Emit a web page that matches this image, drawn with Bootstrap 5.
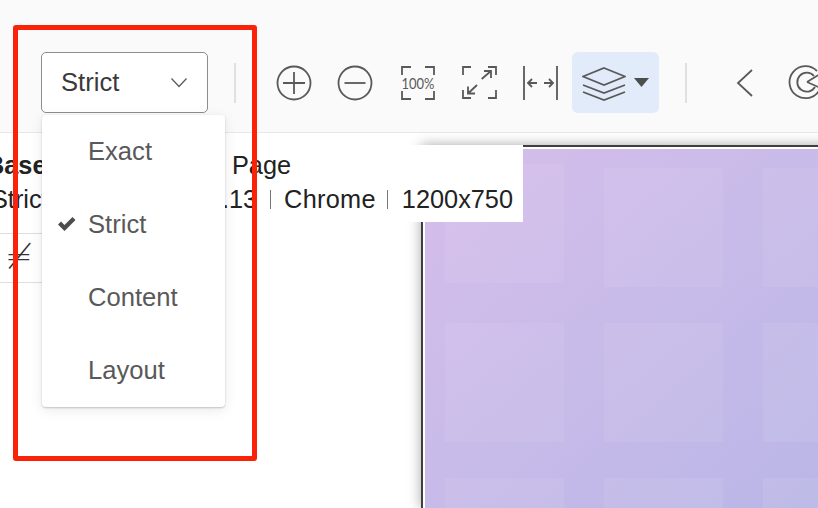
<!DOCTYPE html>
<html lang="en">
<head>
<meta charset="utf-8">
<title>Strict</title>
<link rel="stylesheet" href="https://cdn.jsdelivr.net/npm/bootstrap@5.3.0/dist/css/bootstrap.min.css">
<style>
html,body{height:100%;overflow:hidden;background:#fff}
body{font-family:"Liberation Sans",Arial,sans-serif;color:#333;position:relative;width:818px;height:508px}
.bar{height:133px;padding-top:33px;background:#fafafa;border-bottom:1px solid #e8e8e8;overflow:hidden}
.bar svg{flex:none;display:block}
.pick{width:167px;height:61px;margin-left:41px;padding:0 19px 0 19px;background:#fff;border:1.5px solid #8d8d8d;border-radius:5px;font-size:25.6px;color:#3a3a3a;flex:none}
.pick:hover,.pick:active{background:#fff;border-color:#8d8d8d;color:#3a3a3a}
.vsep{width:1.5px;height:40px;background:#e0e0e0;flex:none;margin-left:26px}
.ic{margin-left:25px}
.ic-a{margin-left:40.5px}
.ic-b{margin-left:26px}
.ic-c{margin-left:24px}
.ic-d{margin-left:48.5px}
.ic-e{margin-left:32px}
.stack{width:87px;height:61px;margin-left:14px;padding:0 0 0 10px;background:#e1ebf9;border:0;border-radius:6px;flex:none}
.stack:hover,.stack:active{background:#e1ebf9}
.ink{fill:none;stroke:#595959;stroke-width:1.8}
.hair{stroke-width:1.2}
.solid{fill:#4d4d4d;stroke:none}
.pct{font-family:Lato,"Liberation Sans",sans-serif;font-size:15px;fill:#595959}
.body-area{height:375px}
.side{width:421px;flex:none;padding-top:100px}
.neq{width:200px;height:50px;border-top:1px solid #dedede;border-bottom:1px solid #dedede;padding-left:5px;font-family:"DejaVu Sans",sans-serif;font-size:33px;font-weight:200;line-height:46px;color:#333}
.shot{flex:1 1 auto;margin-top:12px;border-top:2px solid #3f3f3f;border-left:2px solid #3f3f3f;padding:1.5px 0 0 2px;background:#fff;box-shadow:0 0 12px rgba(0,0,0,.35)}
.wash{height:100%;overflow:hidden;padding:19px 0 0 20px;background:linear-gradient(140deg,#d6bdea 0%,#c8bbe9 45%,#b8b5e6 100%);display:grid;grid-template-columns:repeat(3,119px);grid-auto-rows:119px;column-gap:40px;row-gap:36px;align-items:start}
.tile{height:119px;background:rgba(255,255,255,.07)}
.tile-up{margin-top:-4px}
.info{position:absolute;left:0;top:145px;width:523px;height:77px;padding:3px 10px 0 0;background:#fff;font-size:25.3px;line-height:34px;color:#222;white-space:nowrap;z-index:2;overflow:hidden}
.info-top{margin-left:-14px}
.name{width:246px;font-weight:700;flex:none}
.info-low{margin-left:-9px}
.pipe{width:1px;height:19px;background:#777;margin:0 13px;flex:none}
.pipe-b{margin:0 14px 0 11px}
.wide{letter-spacing:.3px}
.menu-box{top:115px;left:42px;width:183px;height:292px;padding:0;margin:0;border:0;border-radius:4px;background:#fff;box-shadow:0 1px 2px rgba(0,0,0,.2),0 3px 14px rgba(0,0,0,.09);z-index:3}
.menu-box .dropdown-item{height:73px;padding:0 0 0 46px;font-size:25.6px;line-height:73px;color:#595959;position:relative;background:none}
.menu-box svg{position:absolute;left:15px;top:27px}
.mark-red{position:absolute;left:13px;top:25px;width:244px;height:436px;border:5px solid #fa2208;border-radius:3px;z-index:4;pointer-events:none}
</style>
</head>
<body>
<header class="bar d-flex align-items-center">
  <button class="btn pick d-flex align-items-center justify-content-between" type="button"><span>Strict</span>
    <svg width="18" height="11" viewBox="0 0 18 11"><path class="ink hair" d="M1.5 1.5 9 9.5 16.5 1.5"/></svg></button>
  <span class="vsep"></span>
  <svg class="ic-a" width="36" height="36" viewBox="0 0 36 36"><circle class="ink" cx="18" cy="18" r="16.5"/><path class="ink" d="M7 18H29M18 7V29"/></svg>
  <svg class="ic" width="36" height="36" viewBox="0 0 36 36"><circle class="ink" cx="18" cy="18" r="16.5"/><path class="ink" d="M7.5 18H28.5"/></svg>
  <svg class="ic-b" width="38" height="36" viewBox="0 0 38 36"><path class="ink" d="M3 10V2H12M26 2H35V10M3 26V34H12M26 34H35V26"/><text class="pct" x="19" y="23.5" text-anchor="middle" textLength="33" lengthAdjust="spacingAndGlyphs">100%</text></svg>
  <svg class="ic-c" width="36" height="36" viewBox="0 0 36 36"><path class="ink" d="M2 10V2H10M27 2H35V10M2 25V33H10M27 33H35V25M20.700 14 30 6M23 6H30V13M16 20 7 28.500M7 21.500V28.500H14"/></svg>
  <svg class="ic" width="36" height="36" viewBox="0 0 36 36"><path class="ink" d="M2 1V35M35 1V35M15 18H6M10 14 6 18 10 22M22 18H31M27 14 31 18 27 22"/></svg>
  <button class="btn stack d-flex align-items-center gap-2" type="button">
    <svg width="44" height="36" viewBox="0 0 44 36"><path class="ink" d="M22 3 43 11.500 22 20 1 11.500ZM1 20 22 28 43 20M1 27 22 35 43 27"/></svg>
    <svg width="15" height="9" viewBox="0 0 15 9"><path class="solid" d="M0 0H15L7.5 9Z"/></svg>
  </button>
  <span class="vsep"></span>
  <svg class="ic-d" width="20" height="30" viewBox="0 0 20 30"><path class="ink" d="M17 2 3 15 17 28"/></svg>
  <svg class="ic-e" width="38" height="36" viewBox="0 0 38 36"><path class="ink" d="M30 6A16 16 0 1 0 33 24"/><path class="ink" d="M27 11A9.500 9.500 0 1 0 28 22"/><path class="ink" d="M20 17 38 6M20 17 38 25"/></svg>
</header>

<main class="body-area d-flex">
  <aside class="side"><div class="neq">≠</div></aside>
  <section class="shot">
    <div class="wash">
      <div class="tile tile-up"></div><div class="tile"></div><div class="tile"></div>
      <div class="tile"></div><div class="tile"></div><div class="tile"></div>
      <div class="tile"></div><div class="tile"></div><div class="tile"></div>
    </div>
  </section>
</main>

<div class="info">
  <div class="d-flex info-top"><span class="name">Baseline</span><span>Page</span></div>
  <div class="d-flex align-items-center info-low"><span>Strict</span><span class="ms-auto">OS 10.13</span><span class="pipe"></span><span class="wide">Chrome</span><span class="pipe pipe-b"></span><span>1200x750</span></div>
</div>

<ul class="dropdown-menu show menu-box list-unstyled">
  <li><a class="dropdown-item" href="#">Exact</a></li>
  <li><a class="dropdown-item" href="#"><svg width="20" height="18" viewBox="0 0 20 18"><path class="solid" d="M1 9.500 4 6.500 7.500 10 15.500 2 18.500 5 7.500 16Z"/></svg>Strict</a></li>
  <li><a class="dropdown-item" href="#">Content</a></li>
  <li><a class="dropdown-item" href="#">Layout</a></li>
</ul>
<div class="mark-red"></div>
<script src="https://cdn.jsdelivr.net/npm/bootstrap@5.3.0/dist/js/bootstrap.bundle.min.js"></script>
</body>
</html>
